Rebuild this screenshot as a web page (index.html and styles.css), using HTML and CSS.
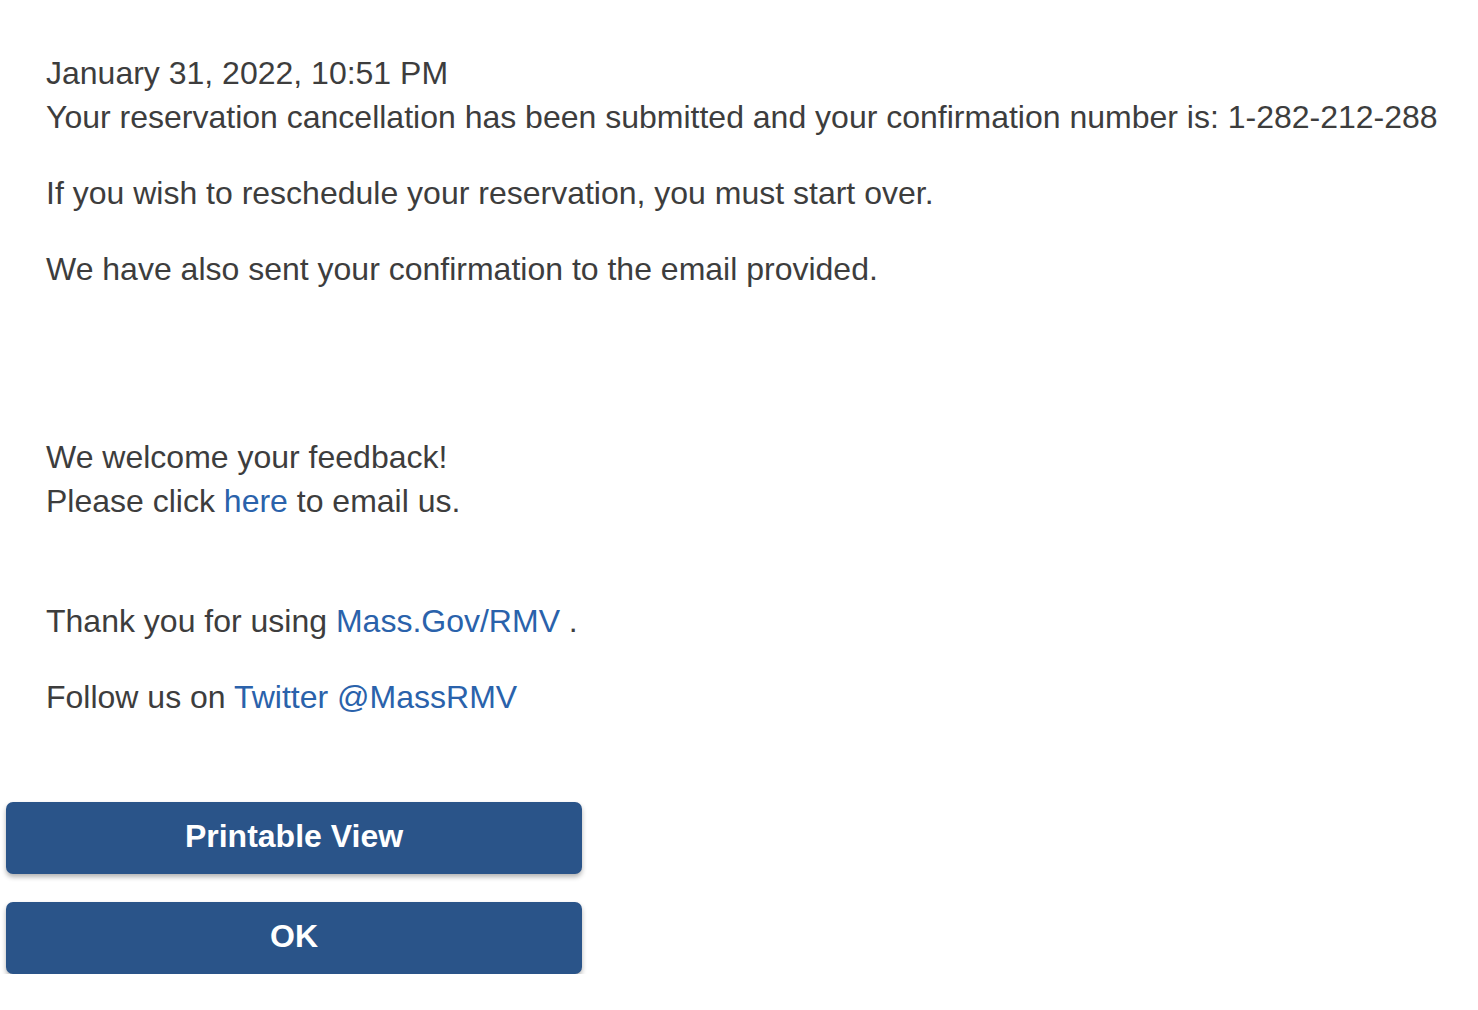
FILE: index.html
```html
<!DOCTYPE html>
<html lang="en">
<head>
<meta charset="utf-8">
<title>Reservation Cancellation</title>
<link rel="stylesheet" href="styles.css">
</head>
<body>
<main class="page">
  <section class="message">
    <p class="para">January 31, 2022, 10:51 PM<br>Your reservation cancellation has been submitted and your confirmation number is: 1-282-212-288</p>
    <p class="para">If you wish to reschedule your reservation, you must start over.</p>
    <p class="para">We have also sent your confirmation to the email provided.</p>
    <p class="para feedback">We welcome your feedback!<br>Please click <a class="link" href="#">here</a> to email us.</p>
    <p class="para thanks">Thank you for using <a class="link" href="#">Mass.Gov/RMV</a> .</p>
    <p class="para">Follow us on <a class="link" href="#">Twitter @MassRMV</a></p>
  </section>
  <div class="actions">
    <button class="btn" type="button">Printable View</button>
    <button class="btn" type="button">OK</button>
  </div>
</main>
</body>
</html>
```

FILE: styles.css
```css
html, body {
  margin: 0;
  padding: 0;
  background: #ffffff;
}

body {
  font-family: "Liberation Sans", Arial, sans-serif;
  color: #3d3d3d;
}

.page {
  padding: 51px 0 0 6px;
}

.message {
  padding-left: 40px;
}

.para {
  margin: 0 0 32px 0;
  font-size: 32px;
  line-height: 44px;
  white-space: nowrap;
}

.feedback {
  margin-top: 144px;
}

.thanks {
  margin-top: 76px;
}

.link {
  color: #2a62ab;
  text-decoration: none;
}

.actions {
  display: flex;
  flex-direction: column;
  gap: 28px;
  width: 576px;
  margin-top: 83px;
}

.btn {
  display: block;
  width: 100%;
  height: 72px;
  border: none;
  border-radius: 7px;
  background: #2a5489;
  color: #ffffff;
  font-family: "Liberation Sans", Arial, sans-serif;
  font-weight: bold;
  font-size: 32px;
  box-shadow: 0 3px 5px rgba(0, 0, 0, 0.3);
  cursor: pointer;
  padding: 0 0 3px 0;
}
```
